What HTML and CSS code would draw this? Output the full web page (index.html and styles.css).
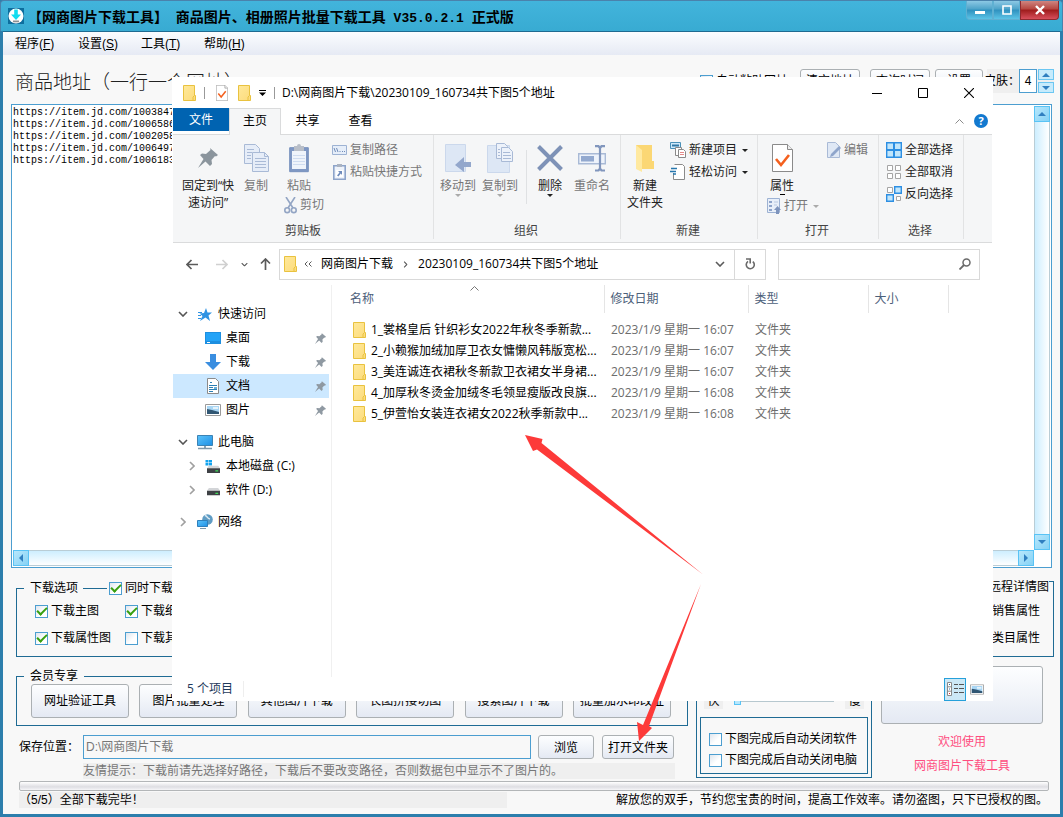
FILE: index.html
```html
<!DOCTYPE html>
<html lang="zh-CN">
<head>
<meta charset="utf-8">
<title>网商图片下载工具</title>
<link rel="stylesheet" href="styles.css">
</head>
<body>
<svg class="defs" width="0" height="0" aria-hidden="true">
  <defs>
    <linearGradient id="fold" x1="0" y1="0" x2="1" y2="1"><stop offset="0" stop-color="#ffe99a"/><stop offset="1" stop-color="#fcdb7c"/></linearGradient>
    <linearGradient id="sky" x1="0" y1="0" x2="1" y2="1"><stop offset="0" stop-color="#5cc3fa"/><stop offset="1" stop-color="#1e90e6"/></linearGradient>
  </defs>
  <symbol id="i-folder" viewBox="0 0 13 16"><path d="M.5.5h11v10h1v5H.5z" fill="url(#fold)" stroke="#e9c23f"/><path d="M11.5 10.500l-1.500 1.500v3.500" fill="none" stroke="#e9c23f"/></symbol>
  <symbol id="i-pin" viewBox="0 0 20 20"><path d="M12 0l8 7-2 1.500-1-.5-3.500 4 .5 4-2 2-4.500-4.500L0 20l5.500-9L2 7l2-1.500 4 .5 4.500-4z" fill="currentColor"/></symbol>
  <symbol id="i-caret" viewBox="0 0 6 3"><path d="M0 0h6L3 3z" fill="currentColor"/></symbol>
  <symbol id="i-down" viewBox="0 0 10 6"><path d="M1 1l4 4 4-4" fill="none" stroke="currentColor" stroke-width="1.600"/></symbol>
  <symbol id="i-right" viewBox="0 0 6 10"><path d="M1 1l4 4-4 4" fill="none" stroke="currentColor" stroke-width="1.600"/></symbol>
  <symbol id="i-page" viewBox="0 0 21 28"><path d="M.5.5h15l5 5v22H.5z" fill="#fff" stroke="#8a8a8a"/><path d="M15.500.5v5h5" fill="#eee" stroke="#8a8a8a"/><path d="M4 15l5 6 8-10" fill="none" stroke="#f4601e" stroke-width="2.600"/></symbol>
  <symbol id="i-copy" viewBox="0 0 25 28"><g fill="#e6edf8" stroke="#a9bad6"><path d="M.5.5h11l4 4v15H.5z"/><path d="M8.500 8.500h12l4 4v15h-16z"/></g><path d="M3 5.500h7M3 8.500h5M3 11.500h4M3 14.500h4M11 14.500h11M11 17.500h11M11 20.500h11M11 23.500h11" stroke="#a9bad6"/><path d="M20.500 8.500v4h4" fill="none" stroke="#a9bad6"/></symbol>
  <symbol id="i-disk" viewBox="0 0 14 8"><path d="M2 0h10l2 3H0z" fill="#d3d5d8"/><path d="M0 3h14v5H0z" fill="#3e4145"/><path d="M9 5h3v1.500H9z" fill="#3fdc58"/></symbol>
  <symbol id="i-photo" viewBox="0 0 16 12"><path d="M.5.5h15v11H.5z" fill="#fff" stroke="#9a9a9a"/><path d="M2 2h12v8H2z" fill="#a9d6f4"/><path d="M2 5l5 1 7 2v2H2z" fill="#305673"/><path d="M8 3h5v2H8z" fill="#e5f3fb"/></symbol>
</svg>

<div class="app">
  <header class="titlebar">
    <svg class="logo" width="16" height="16" viewBox="0 0 16 16"><path fill="#0d6e9e" d="M0 0h16v16H0z"/><circle cx="8" cy="8" r="7.500" fill="#fff"/><path d="M6.200 1.500h3.600v5H13L8 12 3 6.500h3.200z" fill="#12dcf0"/><path d="M5 12.500h6v1.800H5z" fill="#8a9094"/></svg>
    <h1>【网商图片下载工具】<span> </span>商品图片、相册照片批量下载工具<span> V35.0.2.1 </span>正式版</h1>
    <div class="winctl">
      <button aria-label="最小化"><svg width="10" height="10" viewBox="0 0 10 10"><path d="M0 6h10v3H0z" fill="#fff"/></svg></button>
      <button aria-label="最大化"><svg width="10" height="10" viewBox="0 0 10 10"><path d="M1 1h8v8H1z" fill="none" stroke="#fff" stroke-width="1.600"/></svg></button>
      <button class="close" aria-label="关闭"><svg width="10" height="10" viewBox="0 0 10 10"><path d="M1 1l8 8M9 1L1 9" stroke="#fff" stroke-width="2.400"/></svg></button>
    </div>
  </header>

  <div class="client">
    <nav class="menubar">
      <button>程序(<u>F</u>)</button><button>设置(<u>S</u>)</button><button>工具(<u>T</u>)</button><button>帮助(<u>H</u>)</button>
    </nav>

    <div class="head">
      <h2>商品地址（一行一个网址）</h2>
      <label class="chk"><input type="checkbox">自动粘贴网址</label>
      <button class="btn b60">清空地址</button>
      <button class="btn b60 query">查询时间</button>
      <button class="btn b48">设置</button>
      <div class="skin">
        <label for="skin">皮肤：</label><input id="skin" type="text" value="4">
        <div class="spin"><button aria-label="加"><svg width="8" height="4" viewBox="0 0 8 4"><path d="M0 4h8L4 0z" fill="#2f7fc0"/></svg></button><button aria-label="减"><svg width="8" height="4" viewBox="0 0 8 4"><path d="M0 0h8L4 4z" fill="#2f7fc0"/></svg></button></div>
      </div>
    </div>

    <div class="urls">
      <textarea aria-label="商品地址" wrap="off">https://item.jd.com/1003847
https://item.jd.com/1006586
https://item.jd.com/1002058
https://item.jd.com/1006497
https://item.jd.com/1006183</textarea>
      <div class="vbar"><button aria-label="向上"><svg width="8" height="4" viewBox="0 0 8 4"><path d="M0 4h8L4 0z" fill="#2f7fc0"/></svg></button><button aria-label="向下"><svg width="8" height="4" viewBox="0 0 8 4"><path d="M0 0h8L4 4z" fill="#2f7fc0"/></svg></button></div>
      <div class="hbar"><button aria-label="向左"><svg width="4" height="8" viewBox="0 0 4 8"><path d="M4 0v8L0 4z" fill="#2f7fc0"/></svg></button><button aria-label="向右"><svg width="4" height="8" viewBox="0 0 4 8"><path d="M0 0v8l4-4z" fill="#2f7fc0"/></svg></button></div>
    </div>

    <div class="options">
      <fieldset class="frame opt">
        <legend><span>下载选项</span><i></i><label class="chk"><input type="checkbox" checked>同时下载</label></legend>
        <div class="checks">
          <label class="chk"><input type="checkbox" checked>下载主图</label>
          <label class="chk"><input type="checkbox" checked>下载细节图</label>
          <label class="chk"><input type="checkbox" checked>下载属性图</label>
          <label class="chk"><input type="checkbox">下载其他图</label>
        </div>
      </fieldset>
      <div class="frame remote">
        <span class="on-line">远程详情图</span>
        <span>销售属性</span>
        <span>类目属性</span>
      </div>
    </div>

    <div class="lower">
      <div class="left">
        <fieldset class="frame member">
          <legend>会员专享</legend>
          <div class="tools">
            <button class="btn">网址验证工具</button><button class="btn">图片批量处理</button><button class="btn">其他图片下载</button><button class="btn">长图拼接切图</button><button class="btn">搜索图片下载</button><button class="btn">批量加水印改址</button>
          </div>
        </fieldset>
        <div class="save">
          <label for="path">保存位置：</label>
          <input id="path" type="text" value="D:\网商图片下载">
          <button class="btn browse">浏览</button>
          <button class="btn open">打开文件夹</button>
        </div>
        <p class="hint">友情提示：下载前请先选择好路径，下载后不要改变路径，否则数据包中显示不了图片的。</p>
      </div>
      <div class="frame speed">
        <div class="slider"><label for="spd">快</label><input id="spd" type="range" value="0"><span>慢</span></div>
        <div class="frame after">
          <label class="chk"><input type="checkbox">下图完成后自动关闭软件</label>
          <label class="chk"><input type="checkbox">下图完成后自动关闭电脑</label>
        </div>
      </div>
      <div class="right">
        <button class="btn start" aria-label="开始"></button>
        <a href="#">欢迎使用</a>
        <a href="#">网商图片下载工具</a>
      </div>
    </div>

    <div class="progress"></div>
    <footer class="status"><span class="msg">（5/5）全部下载完毕！</span><span>解放您的双手，节约您宝贵的时间，提高工作效率。请勿盗图，只下已授权的图。</span></footer>
  </div>
</div>

<section class="explorer">
  <header class="ex-title">
    <svg width="13" height="16"><use href="#i-folder"/></svg><i></i>
    <svg class="doc" width="12" height="16"><use href="#i-page"/></svg>
    <svg width="13" height="16"><use href="#i-folder"/></svg>
    <svg class="qat" width="7" height="6" viewBox="0 0 7 6"><path d="M0 0h7v1H0zM0 2.500h7L3.500 6z"/></svg><i></i>
    <span class="path">D:\网商图片下载\20230109_160734共下图5个地址</span>
    <button aria-label="最小化"><svg width="10" height="10" viewBox="0 0 10 10"><path d="M0 5.500h10" stroke="#000"/></svg></button>
    <button aria-label="最大化"><svg width="10" height="10" viewBox="0 0 10 10"><path d="M.5.5h9v9h-9z" fill="none" stroke="#000"/></svg></button>
    <button aria-label="关闭"><svg width="10" height="10" viewBox="0 0 10 10"><path d="M0 0l10 10M10 0L0 10" stroke="#000" stroke-width="1.100"/></svg></button>
  </header>
  <nav class="tabs">
    <button class="file">文件</button><button class="on">主页</button><button>共享</button><button>查看</button>
    <svg class="collapse" width="9" height="5" viewBox="0 0 9 5"><path d="M.5 4.500l4-4 4 4" fill="none" stroke="#8b8b8b"/></svg>
    <span class="help">?</span>
  </nav>

  <div class="ribbon">
    <div class="group g1">
      <div class="tools-row">
        <button class="big w54"><span class="ico"><svg class="gray" width="20" height="20"><use href="#i-pin"/></svg></span>固定到“快<br>速访问”</button>
        <button class="big dim w42"><span class="ico"><svg width="25" height="28"><use href="#i-copy"/></svg></span>复制</button>
        <div class="stack paste">
          <button class="big dim"><span class="ico"><svg width="20" height="29" viewBox="0 0 20 29"><path d="M.7 3.700h18.600v24H.7z" fill="#7f98c4" stroke="#7690bd"/><path d="M3 7h14v18H3z" fill="#eff4fb"/><path d="M5 2h3a2 2 0 014 0h3v5H5z" fill="#b8bec8"/><path d="M4 11.500h12M4 14.500h12M4 17.500h12M4 20.500h12" stroke="#cfdcf0"/></svg></span>粘贴</button>
          <button class="small dim cut"><svg width="13" height="17" viewBox="0 0 13 17"><path d="M2 0l7 11M11 0L4 11" stroke="#93a5c4" stroke-width="1.600"/><circle cx="3.200" cy="13.200" r="2.400" fill="none" stroke="#93a5c4" stroke-width="1.600"/><circle cx="9.800" cy="13.200" r="2.400" fill="none" stroke="#93a5c4" stroke-width="1.600"/></svg>剪切</button>
        </div>
        <div class="stack rows m5">
          <button class="small dim"><svg width="15" height="10" viewBox="0 0 15 10"><path d="M.5.5h14v9H.5z" fill="#e6eef9" stroke="#9db2d3"/><path d="M2 3l1.500 4M4.500 3L6 7M7.500 6.500h1M10 6.500h1M12 6.500h1" stroke="#6f8bb8"/></svg>复制路径</button>
          <button class="small dim"><svg width="15" height="16" viewBox="0 0 15 16"><path d="M1.800 1.800h11.400v13.400H1.800z" fill="#eef3fb" stroke="#8da4ca" stroke-width="1.600"/><path d="M5 0h5v3H5z" fill="#aab3c2"/><path d="M4 6h7v7H4z" fill="#fff"/><path d="M5 11.500l2.500-3L6 7h4v4L8.800 9.600 6.500 12.500z" fill="#6f8bbb"/></svg>粘贴快捷方式</button>
        </div>
      </div>
      <div class="gname">剪贴板</div>
    </div>

    <div class="group g2">
      <div class="tools-row">
        <button class="big dim w42"><span class="ico"><svg width="26" height="28" viewBox="0 0 26 28"><path d="M.5.5h20v27H.5z" fill="#dde7f5" stroke="#cbd8ec"/><path d="M26 18h-7v-5l-9 8 9 7v-5h7z" fill="#93a7cc"/></svg></span>移动到<svg class="caret" width="6" height="3"><use href="#i-caret"/></svg></button>
        <button class="big dim w42"><span class="ico"><svg width="26" height="30" viewBox="0 0 26 30"><path d="M.5 2.500h22v27H.5z" fill="#dde7f5" stroke="#cbd8ec"/><path d="M9.500.5h8l3 3v12h-11z" fill="#edf2fa" stroke="#a9bad6"/><path d="M14.500 4.500h7l4 4v10h-11z" fill="#edf2fa" stroke="#a9bad6"/><path d="M16 9.500h7M16 12.500h8M16 15.500h8M11 6.500h2M11 9.500h2M11 12.500h2" stroke="#a9bad6"/></svg></span>复制到<svg class="caret" width="6" height="3"><use href="#i-caret"/></svg></button>
        <i class="vsep"></i>
        <button class="big w36"><span class="ico"><svg width="26" height="26" viewBox="0 0 26 26"><path d="M1.500 1.500l23 23M24.500 1.500l-23 23" stroke="#7e92b7" stroke-width="4"/></svg></span>删除<svg class="caret" width="6" height="3"><use href="#i-caret"/></svg></button>
        <button class="big dim w42 m3"><span class="ico"><svg width="28" height="27" viewBox="0 0 28 27"><path d="M.7 8.700h26.600v10H.7z" fill="#eef3fb" stroke="#a9bad6" stroke-width="1.400"/><path d="M3 11h13v5.500H3z" fill="#93a9cf"/><path d="M22 2v22M17 1.200h3.500L22 3l1.500-1.800H27M17 25.500h3.500l1.500-2 1.500 2H27" fill="none" stroke="#8196bd" stroke-width="2.200"/></svg></span>重命名</button>
      </div>
      <div class="gname">组织</div>
    </div>

    <div class="group g3">
      <div class="tools-row">
        <button class="big w42"><span class="ico"><svg width="18" height="28" viewBox="0 0 18 28"><path d="M0 1h16v16h2v8H6l-6-1z" fill="#fbd774"/><path d="M0 1l6 5v22l-6-3z" fill="#ffe9a0"/></svg></span>新建<br>文件夹</button>
        <div class="stack rows m4">
          <button class="small"><svg width="16" height="16" viewBox="0 0 16 16"><path d="M.5.5h10v6H.5z" fill="#cfe9fb" stroke="#4a90b8"/><path d="M2 2.500h7v2H2z" fill="#3278a5"/><path d="M5.500 5.500h6v8h-6z" fill="#fff" stroke="#8a8a8a"/><path d="M8.500 7.500h5l2 2v6h-7z" fill="#fff" stroke="#8a8a8a"/><path d="M10 10.500h4M10 12.500h4" stroke="#e58a8a"/></svg>新建项目<svg class="caret" width="6" height="3"><use href="#i-caret"/></svg></button>
          <button class="small"><svg width="16" height="16" viewBox="0 0 16 16"><path d="M4.500.5h8l2 2v13h-11V9" fill="#fff" stroke="#8a8a8a"/><path d="M1 4.500h6M0 7.500h6M3 10h3" stroke="#2878ae" stroke-width="1.400"/></svg>轻松访问<svg class="caret" width="6" height="3"><use href="#i-caret"/></svg></button>
        </div>
      </div>
      <div class="gname">新建</div>
    </div>

    <div class="group g4">
      <div class="tools-row">
        <div class="stack prop">
          <button class="big"><span class="ico"><svg width="21" height="28"><use href="#i-page"/></svg></span>属性<svg class="caret" width="5" height="1"><path d="M0 0h5v1H0z"/></svg></button>
          <button class="small dim"><svg width="14" height="16" viewBox="0 0 14 16"><path d="M.5.5h12v14H.5z" fill="#e8eff9" stroke="#9db2d3"/><path d="M2 3h3v2H2zM2 7h3v2H2zM2 11h3v2H2z" fill="#8fa5cb"/><path d="M7 4h4M7 7h3" stroke="#b9c8e0"/><path d="M9 16v-4H7l3.500-4L14 12h-2v4z" fill="#7e94bd"/></svg>打开<svg class="caret" width="6" height="3"><use href="#i-caret"/></svg></button>
        </div>
        <div class="stack rows"><button class="small dim"><svg width="14" height="16" viewBox="0 0 14 16"><path d="M.5.5h8l4 4v11H.5z" fill="#dfe8f5" stroke="#a9bad6"/><path d="M4 12l8-8 2 2-8 8-3 1z" fill="#8fa5cb"/></svg>编辑</button></div>
      </div>
      <div class="gname">打开</div>
    </div>

    <div class="group g5">
      <div class="stack rows">
        <button class="small"><svg width="16" height="16" viewBox="0 0 16 16"><path d="M.7.7h14.600v14.600H.7z" fill="#c2e6fb" stroke="#2d8fe3" stroke-width="1.400"/><path d="M8 1v14M1 8h14" stroke="#2d8fe3" stroke-width="2"/></svg>全部选择</button>
        <button class="small"><svg width="16" height="16" viewBox="0 0 16 16"><path d="M1.500 1.500h5v5h-5zM9.500 1.500h5v5h-5zM1.500 9.500h5v5h-5zM9.500 9.500h5v5h-5z" fill="#fff" stroke="#a5a5a5"/></svg>全部取消</button>
        <button class="small"><svg width="16" height="16" viewBox="0 0 16 16"><path d="M1.500 1.500h5v5h-5zM10.500 10.500h4v4h-4z" fill="#fff" stroke="#a5a5a5"/><path d="M8.700.7h6.600v6.600H8.700zM.7 8.700h6.600v6.600H.7z" fill="#c2e6fb" stroke="#2d8fe3" stroke-width="1.400"/></svg>反向选择</button>
      </div>
      <div class="gname">选择</div>
    </div>
  </div>

  <div class="address">
    <button aria-label="后退"><svg width="12" height="11" viewBox="0 0 12 11"><path d="M12 5.500H1.500M5.500 1L1 5.500 5.500 10" fill="none" stroke="#5b5b5b" stroke-width="1.700"/></svg></button>
    <button aria-label="前进" class="fwd"><svg width="12" height="11" viewBox="0 0 12 11"><path d="M0 5.500h10.500M6.500 1L11 5.500 6.500 10" fill="none" stroke="#d0d0d0" stroke-width="1.700"/></svg></button>
    <button aria-label="最近位置" class="recent"><svg width="7" height="5" viewBox="0 0 10 6"><use href="#i-down"/></svg></button>
    <button aria-label="上移" class="up"><svg width="11" height="12" viewBox="0 0 11 12"><path d="M5.500 12V1.500M1 5.500L5.500 1 10 5.500" fill="none" stroke="#5b5b5b" stroke-width="1.700"/></svg></button>
    <div class="crumbs">
      <svg width="13" height="16"><use href="#i-folder"/></svg>
      <svg class="lt" width="8" height="6" viewBox="0 0 8 6"><path d="M3.500.5L1 3l2.500 2.500M7.500.5L5 3l2.500 2.500" fill="none" stroke="#5b5b5b"/></svg>
      <a href="#">网商图片下载</a>
      <svg class="gt" width="5" height="7" viewBox="0 0 6 10"><use href="#i-right"/></svg>
      <a href="#">20230109_160734共下图5个地址</a>
      <svg class="dd" width="10" height="6"><use href="#i-down"/></svg>
      <button class="refresh" aria-label="刷新"><svg width="10" height="12" viewBox="0 0 10 12"><path d="M7.800 3.600A4 4 0 113 3.400" fill="none" stroke="#6a6a6a" stroke-width="1.600"/><path d="M1 1h5M5.200 1v4.500" stroke="#6a6a6a" stroke-width="1.600" fill="none"/></svg></button>
    </div>
    <div class="search"><input type="text" aria-label="搜索"><svg width="12" height="12" viewBox="0 0 12 12"><circle cx="7.500" cy="4.500" r="3.500" fill="none" stroke="#6a6a6a" stroke-width="1.500"/><path d="M5 7l-4.500 4.500" stroke="#6a6a6a" stroke-width="1.800"/></svg></div>
  </div>

  <div class="pane">
    <nav class="tree">
      <a class="top" href="#"><svg class="tw" width="10" height="6"><use href="#i-down"/></svg><svg class="ti" width="14" height="13" viewBox="0 0 14 13"><path d="M8 0l1.500 4.500H14l-3.500 3L12 13 7.500 9.500 2 13l2.500-5-3-2.500L6 5z" fill="#2f93e3"/><path d="M0 4.500h4M0 7.500h3M0 10.500h3" stroke="#2f93e3"/></svg>快速访问</a>
      <a href="#"><svg class="ti" width="16" height="12" viewBox="0 0 16 12"><path d="M0 0h16v12H0z" fill="#1d8fe0"/><path d="M1 1h14v8H1z" fill="#23a3f7"/><path d="M2 10.500h3" stroke="#fff"/></svg>桌面<svg class="pin" width="11" height="11"><use href="#i-pin"/></svg></a>
      <a href="#"><svg class="ti" width="16" height="16" viewBox="0 0 16 16"><path d="M5 0h6v8h5l-8 8-8-8h5z" fill="#3a8ee0"/></svg>下载<svg class="pin" width="11" height="11"><use href="#i-pin"/></svg></a>
      <a href="#" class="sel"><svg class="ti" width="16" height="16" viewBox="0 0 16 16"><path d="M2.500.5h8l3 3v12h-11z" fill="#fff" stroke="#8b8b8b"/><path d="M5 4.500h2M4 7.500h8M4 9.500h4M4 11.500h8M4 13.500h4" stroke="#2b7fb5"/><path d="M9 9h3v2H9z" fill="#6aaed6"/></svg>文档<svg class="pin" width="11" height="11"><use href="#i-pin"/></svg></a>
      <a href="#"><svg class="ti" width="16" height="12"><use href="#i-photo"/></svg>图片<svg class="pin" width="11" height="11"><use href="#i-pin"/></svg></a>
      <a class="top gap" href="#"><svg class="tw" width="10" height="6"><use href="#i-down"/></svg><svg class="ti" width="16" height="15" viewBox="0 0 16 15"><path d="M.5.5h15v10H.5z" fill="url(#sky)" stroke="#3c83b4"/><path d="M7 11h2v2H7z" fill="#8aa2b4"/><path d="M1 13.500h14" stroke="#7f98aa" stroke-width="1.500"/></svg>此电脑</a>
      <a class="drive" href="#"><svg class="tw" width="6" height="10"><use href="#i-right"/></svg><svg class="ti" width="15" height="13" viewBox="0 0 15 13"><path d="M0 0h3v2.500H0zM3.500 0h3v2.500h-3zM0 3h3v2.500H0zM3.500 3h3v2.500h-3z" fill="#12a3ee"/><use href="#i-disk" x="1.500" y="5.500" width="13" height="7.500"/></svg>本地磁盘 (C:)</a>
      <a class="drive" href="#"><svg class="tw" width="6" height="10"><use href="#i-right"/></svg><svg class="ti" width="15" height="13" viewBox="0 0 15 13"><use href="#i-disk" x="1.500" y="4" width="13" height="7.500"/></svg>软件 (D:)</a>
      <a class="top net gap" href="#"><svg class="tw" width="6" height="10"><use href="#i-right"/></svg><svg class="ti" width="16" height="16" viewBox="0 0 16 16"><circle cx="10.500" cy="5.500" r="5.300" fill="#5f9cc4"/><path d="M8 1.500c3 1 2 3 5 3.500" stroke="#dcebf4" stroke-width="1.500" fill="none"/><path d="M.5 6.500h10v6H.5z" fill="url(#sky)" stroke="#2f7fbb"/><path d="M3 14.500h6" stroke="#7f98aa"/></svg>网络</a>
    </nav>
    <div class="list">
      <svg class="sort" width="9" height="5" viewBox="0 0 9 5"><path d="M.5 4.500l4-4 4 4" fill="none" stroke="#777"/></svg>
      <table>
        <colgroup><col class="c1"><col class="c2"><col class="c3"><col class="c4"></colgroup>
        <thead><tr><th>名称</th><th>修改日期</th><th>类型</th><th>大小</th></tr></thead>
        <tbody>
          <tr><td><div><svg width="13" height="16"><use href="#i-folder"/></svg>1_裳格皇后 针织衫女2022年秋冬季新款...</div></td><td>2023/1/9 星期一 16:07</td><td>文件夹</td><td></td></tr>
          <tr><td><div><svg width="13" height="16"><use href="#i-folder"/></svg>2_小赖猴加绒加厚卫衣女慵懒风韩版宽松...</div></td><td>2023/1/9 星期一 16:07</td><td>文件夹</td><td></td></tr>
          <tr><td><div><svg width="13" height="16"><use href="#i-folder"/></svg>3_美连诚连衣裙秋冬新款卫衣裙女半身裙...</div></td><td>2023/1/9 星期一 16:07</td><td>文件夹</td><td></td></tr>
          <tr><td><div><svg width="13" height="16"><use href="#i-folder"/></svg>4_加厚秋冬烫金加绒冬毛领显瘦版改良旗...</div></td><td>2023/1/9 星期一 16:08</td><td>文件夹</td><td></td></tr>
          <tr><td><div><svg width="13" height="16"><use href="#i-folder"/></svg>5_伊萱怡女装连衣裙女2022秋季新款中...</div></td><td>2023/1/9 星期一 16:08</td><td>文件夹</td><td></td></tr>
        </tbody>
      </table>
    </div>
  </div>

  <footer class="ex-status">
    <span>5 个项目</span>
    <button class="on" aria-label="详细信息"><svg width="17" height="14" viewBox="0 0 17 14"><path d="M.5.5h4v13h-4zM.5 4.800h4M.5 9.200h4" fill="#fff" stroke="#8a8a8a"/><path d="M2 2h1v1H2zM2 6.500h1v1H2z" fill="#2a70a0"/><path d="M2 11h1v1H2z" fill="#d33"/><path d="M7 2.500h4M12 2.500h5M7 6.500h4M12 6.500h5M7 10.500h4M12 10.500h5" stroke="#555"/></svg></button>
    <button aria-label="大缩略图"><svg width="14" height="11" viewBox="0 0 16 12"><use href="#i-photo"/></svg></button>
  </footer>
</section>

<svg class="arrows" width="1063" height="817" viewBox="0 0 1063 817" aria-hidden="true">
  <path d="M525 435l17.500 4-1 4L703 574.500 537 449.500l-4 1.500z" fill="#fd3a39"/>
  <path d="M639 741l-2-19 6 3L701 584 649 726l3 2z" fill="#fd3a39"/>
</svg>
</body>
</html>
```

FILE: styles.css
```css
* { box-sizing: border-box; }
body {
  margin: 0;
  position: relative;
  font: 12px/16px "Liberation Sans", "Noto Sans CJK SC", sans-serif;
  color: #000;
  overflow-x: hidden;
}
button, input, textarea { font: inherit; color: inherit; margin: 0; padding: 0; border: 0; background: none; border-radius: 0; }
h1, h2, p { margin: 0; font-weight: normal; }
a { color: inherit; text-decoration: none; }
svg { flex: none; display: block; }
.defs { position: absolute; }

/* main window */
.app { min-height: 100vh; display: flex; flex-direction: column; background: #2c7eac; }
.titlebar {
  height: 31px; display: flex; align-items: center; gap: 4px; padding-left: 7px;
  background: linear-gradient(#42b4dc, #38abd2);
  border: 1px solid #4a82ac; border-bottom: 0; border-radius: 4px 4px 0 0;
}
.titlebar h1 { flex: 1; font: bold 14px/20px "Noto Sans CJK SC", sans-serif; }
.titlebar h1 span { font: bold 13px "Liberation Mono", monospace; white-space: pre; }
.winctl { align-self: flex-start; display: flex; margin-right: 3px; }
.winctl button {
  width: 27px; height: 19px; display: grid; place-items: center;
  background: linear-gradient(#8cc8e4 0, #4da3c9 45%, #2f91bf 50%, #5cc3e6);
  border: 1px solid #5fb0d2; border-top: 0;
}
.winctl button:first-child { border-radius: 0 0 0 4px; }
.winctl .close { width: 39px; background: linear-gradient(#cf8580 0, #b64640 45%, #9e1c1c 50%, #d84f5c); border-color: #8e2a30; border-radius: 0 0 4px 0; }
.client { flex: 1; margin: 0 3px 3px; border-top: 1px solid #1f6b91; background: #f8f8f8; display: flex; flex-direction: column; }
.menubar { height: 23px; display: flex; gap: 25px; padding-left: 12px; background: linear-gradient(#fbfdff, #f0f3f9 50%, #e6eaf4); }
.menubar button { width: 38px; white-space: nowrap; text-align: left; }

.btn { border: 1px solid #abb0b3; border-radius: 3px; background: linear-gradient(#fdfeff, #f1f4f9 50%, #e4e9f3); text-align: center; white-space: nowrap; }
.chk { display: flex; align-items: center; gap: 3px; white-space: nowrap; }
.chk input {
  appearance: none; width: 13px; height: 13px; flex: none; display: grid; place-items: center;
  border: 1px solid #4c9ed0; background: linear-gradient(135deg, #dfe6ee, #fff 60%);
}
.chk input:checked::before { content: ""; width: 8px; height: 4px; border: solid #38a010; border-width: 0 0 2px 2px; transform: translateY(-1px) rotate(-45deg); }

.head { height: 49px; padding: 14px 6px 0 12px; display: flex; align-items: flex-start; }
.head h2 { flex: 1; font: 19px/24px "Noto Sans CJK SC", sans-serif; font-weight: 300; color: #222; }
.head .chk { height: 24px; margin-right: 12px; }
.head .btn { height: 24px; margin-right: 10px; }
.b60 { width: 60px; }
.b48 { width: 48px; }
.head .query { margin-right: 5px; }
.head .b48 { margin-right: 4px; }
.skin { display: flex; height: 24px; background: #efefef; }
.skin label { width: 32px; line-height: 24px; white-space: nowrap; text-indent: -3px; }
.skin input { width: 18px; border: 1px solid #4c9ed0; background: #fff; text-align: center; }
.spin { display: flex; flex-direction: column; gap: 2px; margin-left: 1px; }
.spin button { width: 16px; height: 11px; display: grid; place-items: center; background: #c6ebfc; border: 1px solid #6cc7f2; }

.urls {
  flex: 1; margin: 0 8px; padding: 1px; border: 1px solid #4c9ed0; background: #fff;
  display: grid; grid-template: minmax(0, 1fr) 16px / minmax(0, 1fr) 16px;
}
.urls textarea { resize: none; overflow: hidden; font: 10px/12px "Liberation Mono", monospace; padding: 1px 0; }
.vbar, .hbar { display: flex; justify-content: space-between; border: solid #b9cdd6; }
.vbar { flex-direction: column; border-width: 0 1px; background: linear-gradient(90deg, #cdeeff, #fff); }
.hbar { border-width: 1px 0; background: linear-gradient(#cdeeff, #fff); }
.vbar button, .hbar button { width: 16px; height: 16px; display: grid; place-items: center; background: linear-gradient(135deg, #b7e7fc, #85d2f5); border: 1px solid #59c3f5; margin: 0 -1px; }
.hbar button { margin: -1px 0; }

.frame { border: 1px solid #1f6b94; margin: 0; padding: 0; min-width: 0; }
.options { display: grid; grid-template-columns: 1.3fr 1fr; margin: 12px 6px 0 13px; }
legend { display: flex; align-items: center; height: 16px; margin-left: 7px; padding: 0 6px; background: #f8f8f8; }
.opt legend i { width: 24px; height: 1px; background: #1f6b94; margin: 0 2px 0 5px; }
.checks { padding: 7px 0 10px 18px; display: grid; grid-template-columns: 90px 90px; row-gap: 11px; }
.remote { margin-top: 1px; border-left: 0; display: flex; flex-direction: column; align-items: flex-end; padding: 0 13px 10px 0; gap: 11px; }
.remote .on-line { margin: -3px -9px -3px 0; background: #f8f8f8; }

.lower { display: grid; grid-template-columns: minmax(0, 1fr) 176px 162px; column-gap: 9px; margin: 9px 17px 0 13px; }
.left { padding-top: 2px; margin-right: -1px; }
.tools { display: flex; justify-content: space-between; padding: 0 16px 7px 14px; }
.tools .btn { width: 98px; height: 34px; }
.save { display: flex; height: 24px; margin-top: 9px; padding: 0 14px 0 3px; line-height: 24px; }
.save label { width: 64px; white-space: nowrap; }
.save input { flex: 1; min-width: 0; border: 1px solid #4c9ed0; padding-left: 2px; color: #777; }
.browse { width: 56px; margin: 0 8px 0 7px; }
.open { width: 72px; }
.hint { margin: 4px 13px 0 67px; background: #efefef; color: #777; white-space: nowrap; }
.speed { height: 112px; padding: 3px; display: flex; flex-direction: column; justify-content: flex-end; margin-bottom: 1px; }
.slider { display: flex; margin: 0 4px 8px; justify-content: space-between; align-items: center; }
.slider label, .slider span { width: 19px; height: 16px; text-align: center; background: #efefef; }
.slider input { appearance: none; width: 100px; height: 1px; background: #b7c8cf; }
.slider input::-webkit-slider-thumb { appearance: none; width: 7px; height: 8px; border: 1px solid #59c3f5; background: #b7e7fc; }
.after { height: 57px; padding: 0 0 5px 8px; display: flex; flex-direction: column; justify-content: flex-end; gap: 5px; }
.right { display: flex; flex-direction: column; text-align: center; color: #ff4d80; line-height: 24px; }
.start { height: 58px; margin-bottom: 6px; }
.progress { height: 10px; margin: 2px 11px 0 16px; border: 1px solid #b3b6b8; border-radius: 2px; background: linear-gradient(#fff, #dedee3 60%, #f6f6f8); }
.status { display: flex; justify-content: space-between; margin: 1px 12px 6px 16px; white-space: nowrap; }
.msg { width: 488px; background: #efefef; }

/* file explorer window */
.explorer {
  position: absolute; left: 172px; right: 70px; top: 77px; height: 624px;
  padding: 0 1px; background: #fff; display: flex; flex-direction: column;
  font-family: "Open Sans", "Noto Sans CJK SC", sans-serif;
}
.ex-title { height: 31px; display: flex; align-items: center; padding-left: 10px; }
.ex-title i { width: 1px; height: 12px; background: #999; margin-left: 8px; }
.ex-title .doc { margin: 0 10px 0 11px; }
.ex-title .qat { margin-left: 8px; }
.ex-title .path { flex: 1; margin-left: 7px; white-space: nowrap; }
.ex-title button { width: 46px; height: 30px; display: grid; place-items: center; }
.tabs { height: 27px; display: flex; align-items: flex-start; border-bottom: 1px solid #dadbdc; }
.tabs button { width: 53px; height: 25px; }
.tabs .file { width: 56px; height: 23px; background: #0063b1; color: #fff; }
.tabs .on { width: 52px; height: 27px; padding-bottom: 2px; background: #f5f6f7; border: 1px solid #dadbdc; border-bottom: 0; }
.tabs .collapse { margin: 11px 10px 0 auto; }
.help { width: 14px; height: 14px; margin: 6px 4px 0 0; border-radius: 50%; background: #1279cf; color: #fff; font-weight: bold; line-height: 14px; text-align: center; font-size: 11px; }

.ribbon { height: 108px; display: flex; background: #f5f6f7; border-bottom: 1px solid #dadbdc; color: #222; }
.group { display: flex; flex-direction: column; justify-content: space-between; margin-bottom: 3px; border-right: 1px solid #e2e3e4; }
.g1 { width: 261px; padding-left: 8px; }
.g2 { width: 187px; padding-left: 3px; }
.g3 { width: 137px; padding-left: 3px; }
.g4 { width: 121px; padding-left: 3px; }
.g5 { width: 85px; padding-left: 7px; }
.tools-row { display: flex; }
.gname { text-align: center; color: #444; padding-right: 5px; }
.g1 .gname { margin-left: -8px; padding-right: 0; }
.g5 .gname { margin-left: -7px; padding-right: 2px; }
.big { display: flex; flex-direction: column; align-items: center; padding-top: 7px; line-height: 17px; white-space: nowrap; }
.ico { height: 35px; display: grid; place-items: center; padding-bottom: 3px; }
.gray { color: #8b959d; }
.dim { color: #777; }
.dim .caret { color: #aaa; }
.w54 { width: 54px; }
.w42 { width: 42px; }
.w36 { width: 36px; }
.stack { display: flex; flex-direction: column; align-items: flex-start; }
.paste { margin-left: 3px; width: 47px; }
.paste .big { width: 38px; }
.paste .cut { margin-left: 4px; }
.rows { padding-top: 4px; }
.rows .small { height: 22px; }
.small { display: flex; align-items: center; gap: 3px; height: 22px; white-space: nowrap; }
.small .caret { margin-left: 2px; }
.m5 { margin-left: 5px; }
.m4 { margin-left: 4px; }
.m3 { margin-left: 3px; }
.vsep { width: 1px; height: 54px; margin: 15px 5px 0; background: #dfe1e3; }
.prop { width: 66px; }
.prop .big { width: 42px; }
.prop .small { margin-left: 6px; }

.address { height: 42px; display: flex; align-items: center; padding: 0 12px 0 13px; color: #5b5b5b; }
.fwd { margin-left: 18px; }
.recent { margin-left: 13px; }
.up { margin-left: 12px; }
.crumbs { flex: 1; height: 31px; margin-left: 8px; border: 1px solid #d9d9d9; display: flex; align-items: center; padding-left: 4px; color: #5b5b5b; white-space: nowrap; }
.crumbs a { color: #000; }
.lt { margin: 0 9px 0 7px; }
.gt { margin: 0 10px; }
.dd { margin: 0 9px 0 auto; }
.refresh { width: 31px; height: 29px; border-left: 1px solid #d9d9d9; display: grid; place-items: center; }
.search { width: 202px; height: 31px; margin-left: 12px; border: 1px solid #d9d9d9; display: flex; align-items: center; padding-right: 8px; }
.search input { flex: 1; min-width: 0; outline: 0; }

.pane { flex: 1; display: flex; }
.tree { width: 159px; border-right: 1px solid #f0f0f0; padding: 17px 2px 0 0; }
.tree a { height: 24px; display: flex; align-items: center; padding-left: 32px; white-space: nowrap; }
.tree .top { padding-left: 5px; }
.tree .gap { margin-top: 8px; }
.tree .drive { padding-left: 16px; }
.tree .net .tw { margin: 0 2px; }
.tree .ti { width: 16px; margin-right: 5px; }
.tw { color: #555; margin-right: 0; }
.top .ti { margin-left: 9px; margin-right: 5px; }
.drive .tw { margin-right: 10px; }
.drive .tw, .net .tw { color: #a0a0a0; }
.pin { margin-left: auto; margin-right: 3px; color: #8f99a2; }
.sel { background: #cce8ff; }
.list { flex: 1; position: relative; }
.sort { position: absolute; left: 138px; top: 1px; }
table { border-collapse: collapse; table-layout: fixed; width: 616px; }
.c1 { width: 272px; }
.c2 { width: 144px; }
.c3 { width: 120px; }
.c4 { width: 80px; }
th { height: 28px; padding: 0 0 0 6px; border-right: 1px solid #e5e5e5; font-weight: normal; text-align: left; color: #4c607a; }
th:first-child { padding-left: 18px; }
td { height: 21px; padding: 0 0 0 7px; color: #6d6d6d; white-space: nowrap; }
tbody::before { content: ""; display: block; height: 6px; }
td:first-child { padding-left: 21px; color: #000; }
td div { display: flex; align-items: center; gap: 5px; }
.ex-status { height: 24px; display: flex; align-items: center; padding: 0 4px 0 14px; color: #1e395b; }
.ex-status span { margin-right: auto; padding-right: 10px; border-right: 1px solid #eee; }
.ex-status button { width: 22px; height: 23px; display: grid; place-items: center; }
.ex-status .on { background: #cce8f6; border: 1px solid #26a0da; }

.arrows { position: absolute; left: 0; top: 0; pointer-events: none; }
```
